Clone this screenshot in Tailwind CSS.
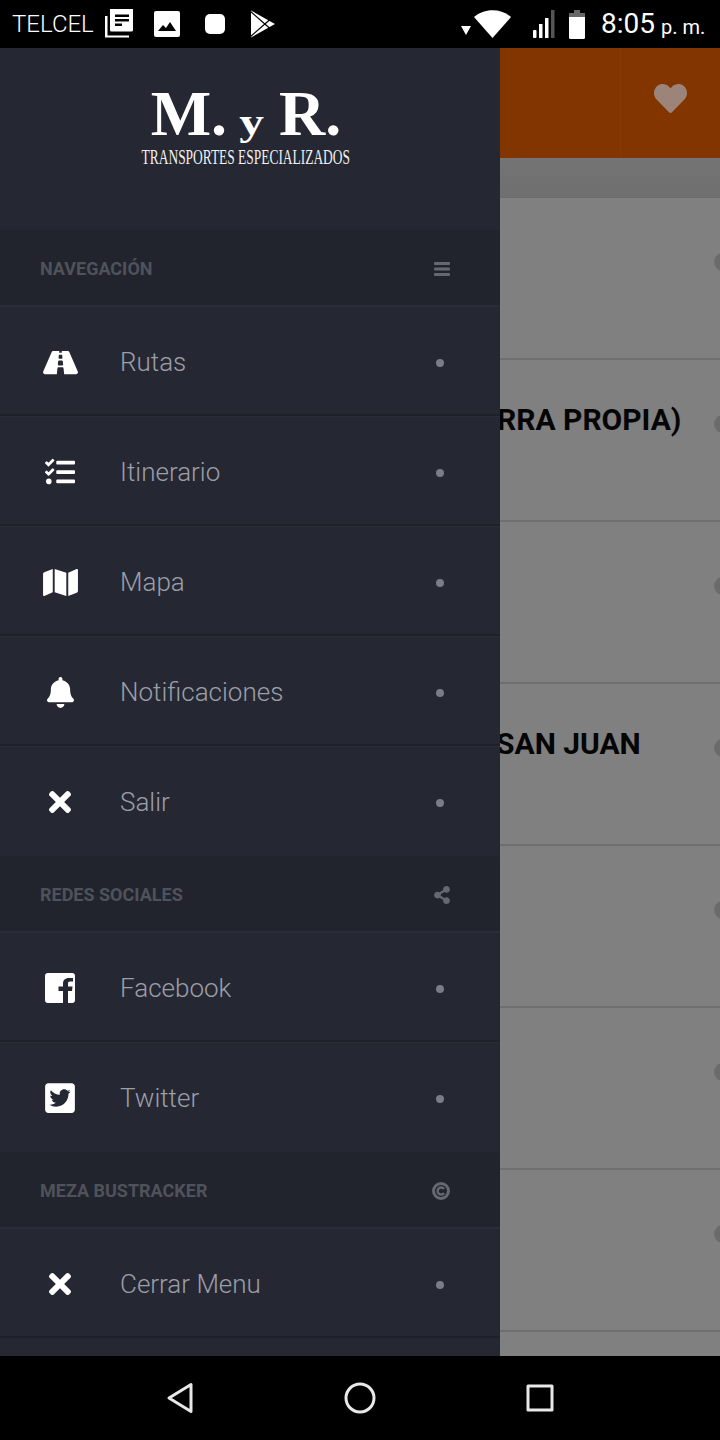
<!DOCTYPE html>
<html lang="es">
<head>
<meta charset="utf-8">
<script src="https://cdn.jsdelivr.net/npm/@tailwindcss/browser@4"></script>
<title>M. y R.</title>
</head>
<body class="bg-black">
<div class="w-[720px] h-[1440px] flex flex-col overflow-hidden font-['Roboto',sans-serif]">

  <!-- status bar -->
  <div class="h-[48px] shrink-0 bg-black text-white flex items-center pl-[12px]">
    <span class="text-[24px] font-light leading-none w-[92px]">TELCEL</span>
    <svg class="w-[30px] h-[30px] -mt-[2px]" viewBox="0 0 30 30" fill="#fff"><path d="M6 1h23v21a1.500 1.500 0 0 1-1.500 1.500H7.500A1.500 1.500 0 0 1 6 22z"/><path d="M1 8h2.500v19.500H25V29.500H1z"/><path fill="#000" d="M11 6.500h14v2.500H11zM11 11h14v2.500H11zM11 15.500h7V18h-7z"/></svg>
    <svg class="w-[26px] h-[26px] ml-[20px]" viewBox="0 0 26 26"><rect width="26" height="26" rx="2" fill="#fff"/><path d="M4 20l5-6 3 3 4-6 6 9z" fill="#000"/></svg>
    <div class="w-[20px] h-[20px] rounded-[5px] bg-white ml-[25px]"></div>
    <svg class="w-[26px] h-[28px] ml-[25px]" viewBox="0 0 26 28"><path d="M1 0.500L25 14 1 27.500z" fill="#fff"/><path d="M0 1L20 18.500M0 27L20 9.500" stroke="#000" stroke-width="1.300" fill="none"/></svg>
    <svg class="w-[10px] h-[9px] ml-[185px] mt-[12px]" viewBox="0 0 10 9" fill="#fff"><path d="M0 0h10L5 9z"/></svg>
    <svg class="w-[37px] h-[28px] ml-[3px] -mt-[1px]" viewBox="0 0 37 28" fill="#fff"><path d="M18.500 28L0 7C10 -2 27 -2 37 7z"/></svg>
    <svg class="w-[22px] h-[28px] ml-[22px]" viewBox="0 0 22 28"><rect x="0" y="20" width="3.500" height="8" rx="1" fill="#fff"/><rect x="6" y="14" width="3.500" height="14" fill="#fff"/><rect x="12" y="8" width="3.500" height="20" fill="#fff"/><rect x="18" y="0" width="3.500" height="28" fill="#555"/></svg>
    <svg class="w-[16px] h-[29px] ml-[14px]" viewBox="0 0 16 29"><path d="M5 0h6v3h5v6H0V3h5z" fill="#666"/><path d="M0 7h16v20.500a1.500 1.500 0 0 1-1.500 1.500h-13A1.500 1.500 0 0 1 0 27.500z" fill="#fff"/></svg>
    <span class="text-[28px] leading-none ml-[16px] font-normal">8:05</span>
    <span class="text-[20px] leading-none ml-[6px] mt-[5px] font-normal">p. m.</span>
  </div>

  <!-- main -->
  <div class="flex-1 flex min-h-0">
    <!-- drawer -->
    <div class="w-[500px] shrink-0 bg-[#252833] flex flex-col">
      <div class="h-[182px] shrink-0 flex flex-col items-center pt-[34px] pr-[8px] text-white font-['Liberation_Serif',serif] font-bold">
        <div class="h-[58px] flex items-baseline whitespace-nowrap leading-none text-[64px]">M.<span class="text-[38px] ml-[15px] mr-[18px] scale-x-[1.3]">y</span>R.</div>
        <div class="text-[22px] font-normal leading-none whitespace-nowrap scale-x-[0.61] mt-[6px] -ml-[1px] text-[#f0f0f0]">TRANSPORTES ESPECIALIZADOS</div>
      </div>

      <div class="h-[76px] shrink-0 bg-[#21242c] border-y border-y-[#2a2d37] border-t-[#22252d] flex items-center justify-between pt-[2px] pl-[40px] pr-[50px]">
        <span class="text-[18px] font-bold text-[#4f525b] -mt-[2px]">NAVEGACIÓN</span>
        <svg class="w-[16px] h-[14px]" viewBox="0 0 16 14" fill="#656872"><rect y="0" width="16" height="3" rx="1"/><rect y="5.500" width="16" height="3" rx="1"/><rect y="11" width="16" height="3" rx="1"/></svg>
      </div>

      <div class="h-[110px] shrink-0 flex items-center border-t border-t-[#2a2d38] border-b-2 border-b-[#1f2129] pt-[3px] pl-[40px] pr-[56px]">
        <div class="w-[80px] pl-[3px]"><svg class="w-[35px] h-[31px]" viewBox="0 0 576 512" fill="#fff"><path d="M573.19 402.67l-139.79-320C428.43 71.29 417.6 64 405.68 64h-97.59l2.45 23.16c.5 4.72-3.21 8.84-7.96 8.84h-29.16c-4.75 0-8.46-4.12-7.96-8.84L267.91 64h-97.59c-11.93 0-22.76 7.29-27.73 18.67L2.8 402.67C-6.45 423.86 8.31 448 30.54 448h196.84l10.31-97.68c.86-8.14 7.72-14.32 15.91-14.32h68.8c8.19 0 15.05 6.18 15.91 14.32L348.62 448h196.84c22.23 0 36.99-24.14 27.73-45.33zM260.4 135.16a8 8 0 0 1 7.96-7.16h39.29c4.09 0 7.53 3.09 7.96 7.16l4.6 43.58c.75 7.09-4.81 13.26-11.93 13.26h-40.54c-7.13 0-12.68-6.17-11.93-13.26l4.59-43.58zM315.64 304h-55.29c-9.5 0-16.91-8.23-15.91-17.68l5.07-48c.86-8.14 7.72-14.32 15.91-14.32h45.15c8.19 0 15.05 6.18 15.91 14.32l5.07 48c1 9.45-6.41 17.68-15.91 17.68z"/></svg></div>
        <span class="flex-1 text-[26px] font-light text-[#9c9ea8]">Rutas</span>
        <span class="w-[8px] h-[8px] mt-[2px] rounded-full bg-[#7a7c87]"></span>
      </div>

      <div class="h-[110px] shrink-0 flex items-center border-t border-t-[#2a2d38] border-b-2 border-b-[#1f2129] pt-[3px] pl-[40px] pr-[56px]">
        <div class="w-[80px] pl-[5px]"><svg class="w-[30px] h-[30px]" viewBox="0 0 512 512" fill="#fff"><path d="M139.61 35.5a12 12 0 0 0-17 0L58.93 98.81l-22.7-22.12a12 12 0 0 0-17 0L3.53 92.41a12 12 0 0 0 0 17l47.59 47.4a12.78 12.78 0 0 0 17.61 0l15.59-15.62L156.52 69a12.09 12.09 0 0 0 .09-17zm0 159.19a12 12 0 0 0-17 0l-63.68 63.72-22.7-22.1a12 12 0 0 0-17 0L3.53 252a12 12 0 0 0 0 17L51 316.5a12.77 12.77 0 0 0 17.6 0l15.7-15.69 72.2-72.22a12 12 0 0 0 .09-16.9zM64 368c-26.49 0-48.59 21.5-48.59 48S37.53 464 64 464a48 48 0 0 0 0-96zm432 16H208a16 16 0 0 0-16 16v32a16 16 0 0 0 16 16h288a16 16 0 0 0 16-16v-32a16 16 0 0 0-16-16zm0-320H208a16 16 0 0 0-16 16v32a16 16 0 0 0 16 16h288a16 16 0 0 0 16-16V80a16 16 0 0 0-16-16zm0 160H208a16 16 0 0 0-16 16v32a16 16 0 0 0 16 16h288a16 16 0 0 0 16-16v-32a16 16 0 0 0-16-16z"/></svg></div>
        <span class="flex-1 text-[26px] font-light text-[#9c9ea8]">Itinerario</span>
        <span class="w-[8px] h-[8px] mt-[2px] rounded-full bg-[#7a7c87]"></span>
      </div>

      <div class="h-[110px] shrink-0 flex items-center border-t border-t-[#2a2d38] border-b-2 border-b-[#1f2129] pt-[3px] pl-[40px] pr-[56px]">
        <div class="w-[80px] pl-[3px]"><svg class="w-[35px] h-[31px]" viewBox="0 0 576 512" fill="#fff"><path d="M0 117.66v346.32c0 11.32 11.43 19.06 21.94 14.86L160 416V32L20.12 87.95A32.006 32.006 0 0 0 0 117.66zM192 416l192 64V96L192 32v384zM554.06 33.16L416 96v384l139.88-55.95A31.996 31.996 0 0 0 576 394.34V48.02c0-11.32-11.43-19.06-21.94-14.86z"/></svg></div>
        <span class="flex-1 text-[26px] font-light text-[#9c9ea8]">Mapa</span>
        <span class="w-[8px] h-[8px] mt-[2px] rounded-full bg-[#7a7c87]"></span>
      </div>

      <div class="h-[110px] shrink-0 flex items-center border-t border-t-[#2a2d38] border-b-2 border-b-[#1f2129] pt-[3px] pl-[40px] pr-[56px]">
        <div class="w-[80px] pl-[7px]"><svg class="w-[27px] h-[31px]" viewBox="0 0 448 512" fill="#fff"><path d="M224 512c35.32 0 63.97-28.65 63.97-64H160.03c0 35.35 28.65 64 63.97 64zm215.39-149.71c-19.32-20.76-55.47-51.99-55.47-154.29 0-77.7-54.48-139.9-127.94-155.16V32c0-17.67-14.32-32-31.98-32s-31.98 14.33-31.98 32v20.84C118.56 68.1 64.08 130.3 64.08 208c0 102.3-36.15 133.53-55.47 154.29-6 6.45-8.66 14.16-8.61 21.71.11 16.4 12.98 32 32.1 32h383.8c19.12 0 32-15.6 32.1-32 .05-7.55-2.61-15.27-8.61-21.71z"/></svg></div>
        <span class="flex-1 text-[26px] font-light text-[#9c9ea8]">Notificaciones</span>
        <span class="w-[8px] h-[8px] mt-[2px] rounded-full bg-[#7a7c87]"></span>
      </div>

      <div class="h-[110px] shrink-0 flex items-center border-t border-t-[#2a2d38] pt-[1px] pl-[40px] pr-[56px]">
        <div class="w-[80px] pl-[8px]"><svg class="w-[24px] h-[32px]" viewBox="0 0 352 512" fill="#fff"><path d="M242.72 256l100.07-100.07c12.28-12.28 12.28-32.19 0-44.48l-22.24-22.24c-12.28-12.28-32.19-12.28-44.48 0L176 189.28 75.93 89.21c-12.28-12.28-32.19-12.28-44.48 0L9.21 111.45c-12.28 12.28-12.28 32.19 0 44.48L109.28 256 9.21 356.07c-12.28 12.28-12.28 32.19 0 44.48l22.24 22.24c12.28 12.28 32.2 12.28 44.48 0L176 322.72l100.07 100.07c12.28 12.28 32.2 12.28 44.48 0l22.24-22.24c12.28-12.28 12.28-32.19 0-44.48L242.72 256z"/></svg></div>
        <span class="flex-1 text-[26px] font-light text-[#9c9ea8]">Salir</span>
        <span class="w-[8px] h-[8px] mt-[2px] rounded-full bg-[#7a7c87]"></span>
      </div>

      <div class="h-[76px] shrink-0 bg-[#21242c] border-y border-y-[#2a2d37] border-t-[#22252d] flex items-center justify-between pt-[2px] pl-[40px] pr-[50px]">
        <span class="text-[18px] font-bold text-[#4f525b] -mt-[2px]">REDES SOCIALES</span>
        <svg class="w-[16px] h-[18px]" viewBox="0 0 448 512" fill="#656872"><path d="M352 320c-22.608 0-43.387 7.819-59.79 20.895l-102.486-64.054a96.551 96.551 0 0 0 0-41.683l102.486-64.054C308.613 184.181 329.392 192 352 192c53.019 0 96-42.981 96-96S405.019 0 352 0s-96 42.981-96 96c0 7.158.79 14.13 2.276 20.841L155.79 180.895C139.387 167.819 118.608 160 96 160c-53.019 0-96 42.981-96 96s42.981 96 96 96c22.608 0 43.387-7.819 59.79-20.895l102.486 64.054A96.301 96.301 0 0 0 256 416c0 53.019 42.981 96 96 96s96-42.981 96-96-42.981-96-96-96z"/></svg>
      </div>

      <div class="h-[110px] shrink-0 flex items-center border-t border-t-[#2a2d38] border-b-2 border-b-[#1f2129] pt-[3px] pl-[40px] pr-[56px]">
        <div class="w-[80px] pl-[5px]"><svg class="w-[30px] h-[30px]" viewBox="0 0 30 30" fill="#fff"><path d="M3 0h24a3 3 0 0 1 3 3v24a3 3 0 0 1-3 3H23V18h4l.6-4.500H23v-3c0-1.300.5-2 2-2h3V5h-4c-4 0-6 2.300-6 5.500v3h-4.500V18H18v12H3a3 3 0 0 1-3-3V3a3 3 0 0 1 3-3z"/></svg></div>
        <span class="flex-1 text-[26px] font-light text-[#9c9ea8]">Facebook</span>
        <span class="w-[8px] h-[8px] mt-[2px] rounded-full bg-[#7a7c87]"></span>
      </div>

      <div class="h-[110px] shrink-0 flex items-center border-t border-t-[#2a2d38] pt-[1px] pl-[40px] pr-[56px]">
        <div class="w-[80px] pl-[5px]"><svg class="w-[30px] h-[34px]" viewBox="0 0 448 512" fill="#fff"><path d="M400 32H48C21.5 32 0 53.5 0 80v352c0 26.5 21.5 48 48 48h352c26.5 0 48-21.5 48-48V80c0-26.5-21.5-48-48-48zm-48.9 158.8c.2 2.8.2 5.7.2 8.5 0 86.7-66 186.6-186.6 186.6-37.2 0-71.7-10.8-100.7-29.4 5.3.6 10.4.8 15.8.8 30.7 0 58.9-10.4 81.4-28-28.8-.6-53-19.5-61.3-45.5 10.1 1.5 19.2 1.5 29.6-1.2-30-6.1-52.5-32.5-52.5-64.4v-.8c8.7 4.9 18.9 7.9 29.6 8.3a65.447 65.447 0 0 1-29.2-54.6c0-12.2 3.2-23.4 8.9-33.1 32.3 39.8 80.8 65.8 135.2 68.6-9.3-44.5 24-80.6 64-80.6 18.9 0 35.9 7.9 47.9 20.7 14.8-2.8 29-8.3 41.6-15.8-4.9 15.2-15.1 28-28.8 36.1 13.2-1.4 26-5.1 37.8-10.2-8.9 13.1-20.1 24.7-32.9 34z"/></svg></div>
        <span class="flex-1 text-[26px] font-light text-[#9c9ea8]">Twitter</span>
        <span class="w-[8px] h-[8px] mt-[2px] rounded-full bg-[#7a7c87]"></span>
      </div>

      <div class="h-[76px] shrink-0 bg-[#21242c] border-y border-y-[#2a2d37] border-t-[#22252d] flex items-center justify-between pt-[2px] pl-[40px] pr-[50px]">
        <span class="text-[18px] font-bold text-[#4f525b] -mt-[2px]">MEZA BUSTRACKER</span>
        <svg class="w-[18px] h-[18px]" viewBox="0 0 18 18" fill="none" stroke="#656872"><circle cx="9" cy="9" r="7.500" stroke-width="3"/><path d="M12 7a3.500 3.500 0 1 0 0 4" stroke-width="2.500"/></svg>
      </div>

      <div class="h-[110px] shrink-0 flex items-center border-t border-t-[#2a2d38] border-b-2 border-b-[#1f2129] pt-[3px] pl-[40px] pr-[56px]">
        <div class="w-[80px] pl-[8px]"><svg class="w-[24px] h-[32px]" viewBox="0 0 352 512" fill="#fff"><path d="M242.72 256l100.07-100.07c12.28-12.28 12.28-32.19 0-44.48l-22.24-22.24c-12.28-12.28-32.19-12.28-44.48 0L176 189.28 75.93 89.21c-12.28-12.28-32.19-12.28-44.48 0L9.21 111.45c-12.28 12.28-12.28 32.19 0 44.48L109.28 256 9.21 356.07c-12.28 12.28-12.28 32.19 0 44.48l22.24 22.24c12.28 12.28 32.2 12.28 44.48 0L176 322.72l100.07 100.07c12.28 12.28 32.2 12.28 44.48 0l22.24-22.24c12.28-12.28 12.28-32.19 0-44.48L242.72 256z"/></svg></div>
        <span class="flex-1 text-[26px] font-light text-[#9c9ea8]">Cerrar Menu</span>
        <span class="w-[8px] h-[8px] mt-[2px] rounded-full bg-[#7a7c87]"></span>
      </div>
    </div>

    <!-- dimmed page behind -->
    <div class="flex-1 min-w-0 overflow-hidden flex flex-col bg-[#808080]">
      <div class="h-[110px] shrink-0 bg-[#833500] flex justify-end">
        <div class="w-[100px] h-full border-l border-l-[#863a06] flex items-center justify-center pb-[10px]">
          <svg class="w-[33px] h-[33px]" viewBox="0 0 512 512" fill="#9c8578"><path d="M462.3 62.6C407.5 15.9 326 24.3 275.7 76.2L256 96.5l-19.7-20.3C186.1 24.3 104.5 15.9 49.7 62.6c-62.8 53.6-66.1 149.800-9.900 207.900l193.500 199.800c12.500 12.900 32.800 12.900 45.300 0l193.500-199.800c56.300-58.100 53-154.300-9.800-207.900z"/></svg>
        </div>
      </div>
      <div class="h-[40px] shrink-0 bg-gradient-to-b from-[#747474] to-[#6f6f6f] border-b border-b-[#6b6b6b]"></div>

      <div class="h-[162px] shrink-0 relative border-b-2 border-b-[#6f6f6f]"><span class="absolute top-[55px] left-[214px] w-[18px] h-[18px] rounded-full bg-[#6b6b6b]"></span></div>
      <div class="h-[162px] shrink-0 relative border-b-2 border-b-[#6f6f6f] pt-[40px] overflow-hidden">
        <span class="block text-[30px] leading-[40px] font-bold text-[#050505] whitespace-nowrap -ml-[3px]">RRA PROPIA)</span>
        <span class="absolute top-[55px] left-[214px] w-[18px] h-[18px] rounded-full bg-[#6b6b6b]"></span>
      </div>
      <div class="h-[162px] shrink-0 relative border-b-2 border-b-[#6f6f6f]"><span class="absolute top-[55px] left-[214px] w-[18px] h-[18px] rounded-full bg-[#6b6b6b]"></span></div>
      <div class="h-[162px] shrink-0 relative border-b-2 border-b-[#6f6f6f] pt-[40px]">
        <span class="block text-[30px] leading-[40px] font-bold text-[#050505] whitespace-nowrap -ml-[4px]">SAN JUAN</span>
        <span class="absolute top-[55px] left-[214px] w-[18px] h-[18px] rounded-full bg-[#6b6b6b]"></span>
      </div>
      <div class="h-[162px] shrink-0 relative border-b-2 border-b-[#6f6f6f]"><span class="absolute top-[55px] left-[214px] w-[18px] h-[18px] rounded-full bg-[#6b6b6b]"></span></div>
      <div class="h-[162px] shrink-0 relative border-b-2 border-b-[#6f6f6f]"><span class="absolute top-[55px] left-[214px] w-[18px] h-[18px] rounded-full bg-[#6b6b6b]"></span></div>
      <div class="h-[162px] shrink-0 relative border-b-2 border-b-[#6f6f6f]"><span class="absolute top-[55px] left-[214px] w-[18px] h-[18px] rounded-full bg-[#6b6b6b]"></span></div>
    </div>
  </div>

  <!-- nav bar -->
  <div class="h-[84px] shrink-0 bg-black flex items-center justify-between pl-[166px] pr-[166px]">
    <svg class="w-[28px] h-[32px]" viewBox="0 0 28 32" fill="none" stroke="#e8e8e8" stroke-width="3" stroke-linejoin="round"><path d="M25 2.500V29.500L3 16z"/></svg>
    <svg class="w-[32px] h-[32px]" viewBox="0 0 32 32" fill="none" stroke="#e8e8e8" stroke-width="3"><circle cx="16" cy="16" r="14"/></svg>
    <svg class="w-[28px] h-[28px]" viewBox="0 0 28 28" fill="none" stroke="#e8e8e8" stroke-width="3" stroke-linejoin="round"><rect x="2" y="2" width="24" height="24"/></svg>
  </div>
</div>
</body>
</html>
